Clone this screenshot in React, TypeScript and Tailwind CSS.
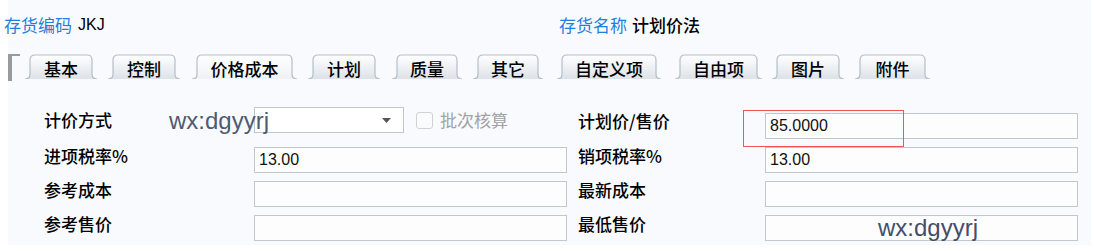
import React from "react";

const cjk = { fontFamily: '"Noto Sans CJK SC", "Noto Sans", sans-serif' };
const latin = { fontFamily: '"Liberation Sans", Arial, sans-serif' };

// [label, width, margin-left]
const tabs: [string, number, number][] = [
  ["基本", 72, 0],
  ["控制", 72, 11],
  ["价格成本", 105, 12],
  ["计划", 72, 11],
  ["质量", 70, 12],
  ["其它", 70, 11],
  ["自定义项", 104, 14],
  ["自由项", 87, 14],
  ["图片", 72, 10],
  ["附件", 75, 11],
];

function tabPath(w: number, h: number) {
  const f = 5;
  return `M0 ${h} C${f * 0.7} ${h} ${f} ${h - 2} ${f} ${h - f} L${f} 6 Q${f} 1 ${f + 5} 1 L${w - f - 5} 1 Q${w - f} 1 ${w - f} 6 L${w - f} ${h - f} C${w - f} ${h - 2} ${w - f * 0.7} ${h} ${w} ${h}`;
}

function Tab({ label, width, active, ml }: { label: string; width: number; active?: boolean; ml: number }) {
  const h = 25;
  const id = active ? "tabA" : "tabN";
  return (
    <div className="relative flex items-center justify-center" style={{ width, height: h, marginLeft: ml }}>
      <svg className="absolute inset-0" width={width} height={h}>
        <defs>
          <linearGradient id={id} x1="0" y1="0" x2="0" y2="1">
            <stop offset="0" stopColor="#ffffff" />
            <stop offset="1" stopColor={active ? "#eef1f5" : "#dde2e8"} />
          </linearGradient>
        </defs>
        <path d={tabPath(width, h) + " Z"} fill={`url(#${id})`} />
        <path d={tabPath(width, h)} fill="none" stroke="#b3becb" strokeWidth="1.2" />
      </svg>
      <span className="relative text-[17px] font-medium leading-none text-black pt-[3px]" style={cjk}>
        {label}
      </span>
    </div>
  );
}

function Field({ value, w = 313 }: { value?: string; w?: number }) {
  return (
    <div
      className="h-[26px] border border-[#c3c7cd] bg-[#fdfdfe] flex items-center pl-[4px] text-[16px] text-[#111]"
      style={{ width: w, ...latin }}
    >
      {value}
    </div>
  );
}

function Label({ text, w }: { text: string; w: number }) {
  return (
    <div className="text-[17px] font-medium leading-[18px] text-black shrink-0" style={{ width: w, ...cjk }}>
      {text}
    </div>
  );
}

export default function App() {
  const rows: [string, string, string, string][] = [
    ["进项税率%", "13.00", "销项税率%", "13.00"],
    ["参考成本", "", "最新成本", ""],
    ["参考售价", "", "最低售价", ""],
  ];

  return (
    <div className="w-[1094px] h-[251px] bg-white overflow-hidden">
      <div className="relative ml-[8px] w-[1083px] h-[245px] bg-[#f9fafd]">
        {/* header */}
        <div className="flex items-center h-[51px] pb-[2px] text-[17px]" style={cjk}>
          <div className="flex items-center w-[555px] -ml-[4px]">
            <span className="text-[#1f7fe0]">存货编码</span>
            <span className="ml-[6px] text-[16px] text-black" style={latin}>JKJ</span>
          </div>
          <span className="text-[#1f7fe0]">存货名称</span>
          <span className="ml-[5px] font-medium text-black">计划价法</span>
        </div>

        {/* tab strip */}
        <div className="flex items-end h-[29px]">
          <div className="relative w-[12px] h-[27px] self-start mt-[3px]">
            <div className="absolute left-[0px] top-0 w-[4px] h-[27px] bg-[#9a9a9a]" />
            <div className="absolute left-[0px] top-0 w-[12px] h-[2px] bg-[#9a9a9a]" />
          </div>
          <div className="flex items-end ml-[5px] mb-[1px]">
            {tabs.map(([l, w, ml]) => (
              <Tab key={l} label={l} width={w} ml={ml} active={l === "价格成本"} />
            ))}
          </div>
        </div>

        {/* form */}
        <div className="pt-[27px] pl-[36px] flex flex-col gap-[8px]">
          <div className="flex items-start h-[32px]">
            <div className="shrink-0 w-[210px] pt-[4px]">
              <div className="text-[17px] font-medium leading-[18px] text-black" style={cjk}>计价方式</div>
            </div>
            <div className="flex items-center w-[324px] shrink-0">
              <div className="relative w-[150px] h-[26px] border border-[#c3c7cd] bg-white flex items-center justify-end pr-[12px]">
                <svg width="9" height="5" viewBox="0 0 9 5">
                  <path d="M0 0 L9 0 L4.5 5 Z" fill="#555" />
                </svg>
              </div>
              <div className="ml-[12px] w-[17px] h-[17px] rounded-[3px] border border-[#cfd2d6] bg-[#fbfbfc]" />
              <span className="ml-[7px] text-[17px] text-[#a2a2a2]" style={cjk}>批次核算</span>
            </div>
            <div className="shrink-0 w-[187px] pt-[5px]">
              <div className="text-[17px] font-medium leading-[18px] text-black" style={cjk}>计划价/售价</div>
            </div>
            <div className="mt-[6px]">
              <Field value="85.0000" />
            </div>
          </div>
          {rows.map(([l1, v1, l2, v2]) => (
            <div key={l1} className="flex items-start">
              <Label text={l1} w={210} />
              <Field value={v1} />
              <div className="w-[11px] shrink-0" />
              <Label text={l2} w={187} />
              <Field value={v2} />
            </div>
          ))}
        </div>

        {/* overlays */}
        <div
          className="absolute left-[161px] top-[106px] text-[24px] leading-[30px] text-[#4f5b72]"
          style={latin}
        >
          wx:dgyyrj
        </div>
        <div
          className="absolute left-[870px] top-[213px] text-[24px] leading-[30px] text-[#434f66]"
          style={latin}
        >
          wx:dgyyrj
        </div>
        <div className="absolute left-[735px] top-[110px] w-[161px] h-[37px] border-[1.5px] border-[#f05454]" />
      </div>
    </div>
  );
}
